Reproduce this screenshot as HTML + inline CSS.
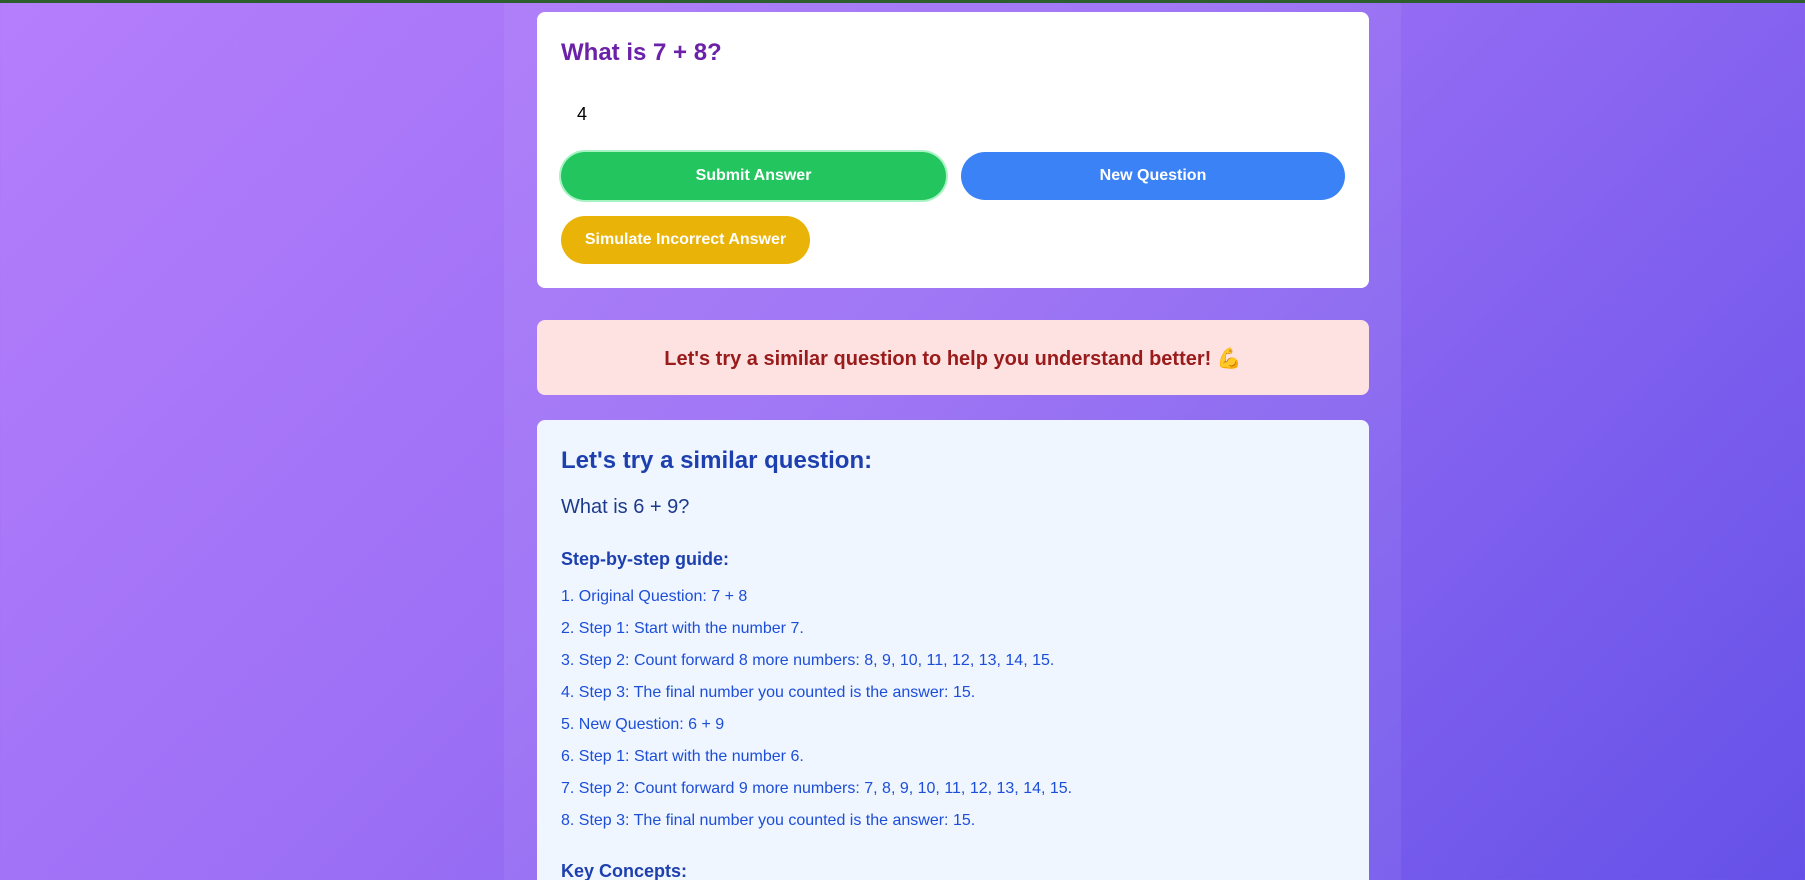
<!DOCTYPE html>
<html><head><meta charset="utf-8"><style>
*{box-sizing:border-box;margin:0;padding:0}
html,body{width:1805px;height:880px;overflow:hidden}
body{font-family:"Liberation Sans",sans-serif;background:linear-gradient(135deg,#b57efc 0%,#9b6ff5 45%,#6551e8 100%);position:relative}
.bar{position:absolute;top:0;left:0;right:0;height:3px;background:#2d5e2d}
.col{position:absolute;left:504px;width:897px;top:3px;bottom:0;background:rgba(255,255,255,0.06)}
.card{position:absolute;left:537px;width:832px;background:#fff;border-radius:8px}
.c1{top:12px;height:276px}
h2{position:absolute;left:24px;top:27px;font-size:24px;color:#6b21a8;font-weight:bold}
.inp{position:absolute;left:40px;top:92px;font-size:18px;color:#000}
.btn{position:absolute;height:48px;border-radius:24px;color:#fff;font-weight:bold;font-size:16px;display:flex;align-items:center;justify-content:center}
.pink{position:absolute;left:537px;width:832px;top:320px;height:75px;background:#fee2e2;border-radius:8px;color:#991b1b;font-weight:bold;font-size:20px;display:flex;align-items:center;justify-content:center;padding-top:2px}
.c2{top:420px;height:500px;background:#eff6ff}
.c2 .h{position:absolute;left:24px;top:27px;font-size:24px;font-weight:bold;color:#1e40af}
.c2 .q{position:absolute;left:24px;top:76px;font-size:20px;color:#1e3a8a}
.c2 .s{position:absolute;left:24px;top:129px;font-size:18px;font-weight:bold;color:#1e40af}
.c2 ol{position:absolute;left:24px;top:167px;list-style:none;font-size:16px;color:#1d4ed8}
.c2 li{height:32px;line-height:20px}
.c2 .k{position:absolute;left:24px;top:441px;font-size:18px;font-weight:bold;color:#1e40af}
</style></head><body>
<div class="bar"></div>
<div class="col"></div>
<div class="card c1">
<h2>What is 7 + 8?</h2>
<div class="inp">4</div>
<div class="btn" style="left:24px;top:140px;width:385px;background:#22c55e;box-shadow:0 0 0 2px #a7f3c4">Submit Answer</div>
<div class="btn" style="left:424px;top:140px;width:384px;background:#3b82f6">New Question</div>
<div class="btn" style="left:24px;top:204px;width:249px;background:#eab308">Simulate Incorrect Answer</div>
</div>
<div class="pink">Let's try a similar question to help you understand better! 💪</div>
<div class="card c2">
<div class="h">Let's try a similar question:</div>
<div class="q">What is 6 + 9?</div>
<div class="s">Step-by-step guide:</div>
<ol>
<li>1. Original Question: 7 + 8</li>
<li>2. Step 1: Start with the number 7.</li>
<li>3. Step 2: Count forward 8 more numbers: 8, 9, 10, 11, 12, 13, 14, 15.</li>
<li>4. Step 3: The final number you counted is the answer: 15.</li>
<li>5. New Question: 6 + 9</li>
<li>6. Step 1: Start with the number 6.</li>
<li>7. Step 2: Count forward 9 more numbers: 7, 8, 9, 10, 11, 12, 13, 14, 15.</li>
<li>8. Step 3: The final number you counted is the answer: 15.</li>
</ol>
<div class="k">Key Concepts:</div>
</div>
</body></html>
